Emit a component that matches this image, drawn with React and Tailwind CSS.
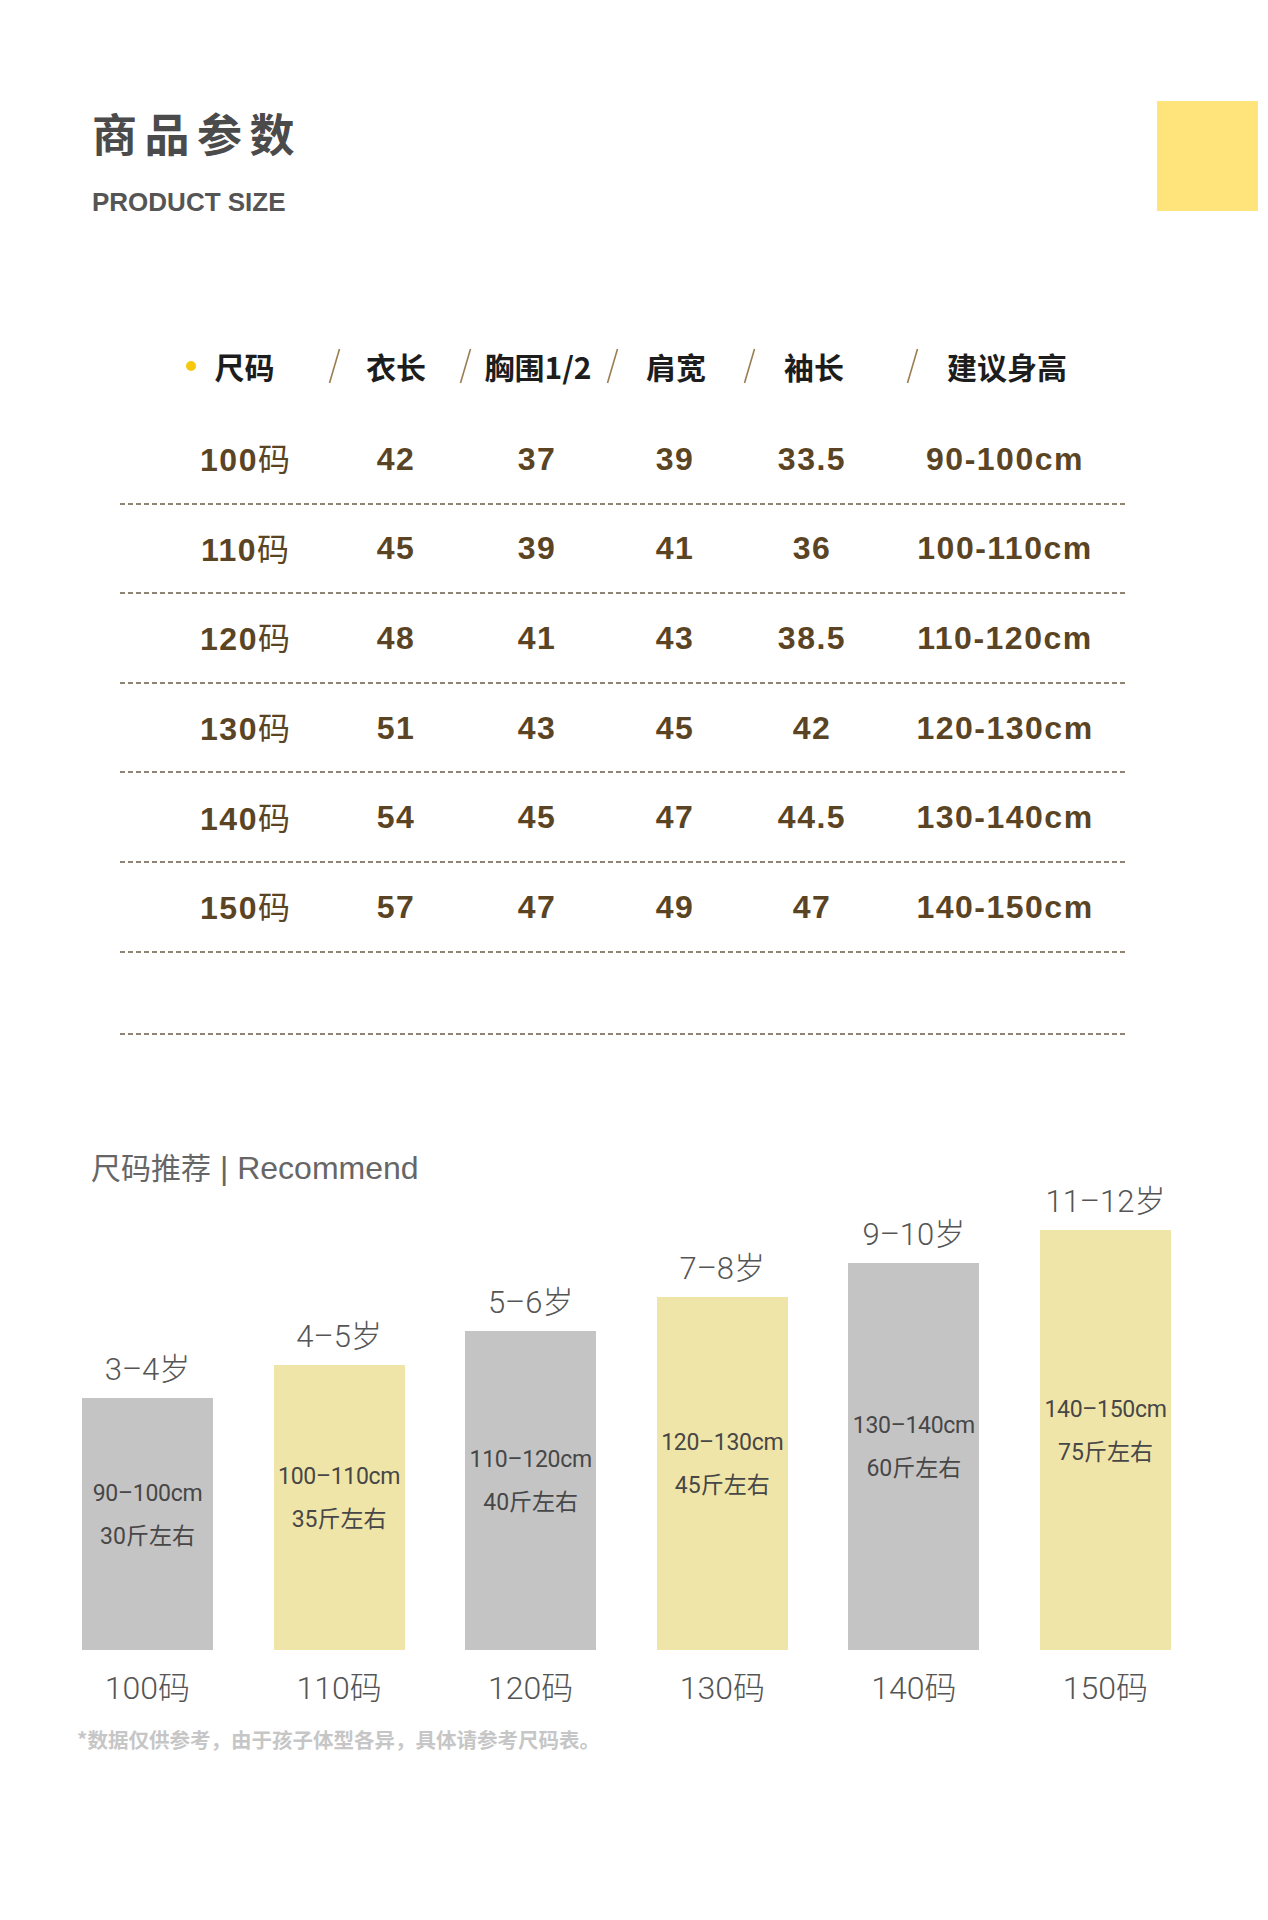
// Size chart page: product parameter table + size recommendation bars
const CJK = "font-['Noto_Sans_CJK_SC',sans-serif]";
const NUM = "font-['Liberation_Sans','Noto_Sans_CJK_SC',sans-serif]";
const THIN = "font-['Roboto','Noto_Sans_CJK_SC',sans-serif]";

const rows = [
  ['100', '42', '37', '39', '33.5', '90-100cm'],
  ['110', '45', '39', '41', '36', '100-110cm'],
  ['120', '48', '41', '43', '38.5', '110-120cm'],
  ['130', '51', '43', '45', '42', '120-130cm'],
  ['140', '54', '45', '47', '44.5', '130-140cm'],
  ['150', '57', '47', '49', '47', '140-150cm'],
];

const bars = [
  { age: '3–4岁', h: 252, cm: '90–100cm', jin: '30', size: '100', yellow: false },
  { age: '4–5岁', h: 285, cm: '100–110cm', jin: '35', size: '110', yellow: true },
  { age: '5–6岁', h: 319, cm: '110–120cm', jin: '40', size: '120', yellow: false },
  { age: '7–8岁', h: 353, cm: '120–130cm', jin: '45', size: '130', yellow: true },
  { age: '9–10岁', h: 387, cm: '130–140cm', jin: '60', size: '140', yellow: false },
  { age: '11–12岁', h: 420, cm: '140–150cm', jin: '75', size: '150', yellow: true },
];

function Slash({ className }) {
  return (
    <svg width="13" height="36" viewBox="0 0 13 36" className={className}>
      <line x1="11.5" y1="1" x2="1.5" y2="35" stroke="#9b7d52" strokeWidth="1.6" />
    </svg>
  );
}

function Dashed() {
  return (
    <div className="h-[2px] w-full bg-[image:repeating-linear-gradient(90deg,#8f8473_0px,#8f8473_5px,transparent_5px,transparent_8px)]" />
  );
}

export default function App() {
  return (
    <div className="w-[1268px] min-h-[1920px] bg-white">
      {/* Heading */}
      <div className="flex items-start justify-between">
        <div className="pl-[92px] pt-[110px]">
          <h1 className={`${CJK} text-[45px] leading-none font-bold tracking-[7.5px] text-[#4b4b4b]`}>
            商品参数
          </h1>
          <p className={`${NUM} mt-[34px] text-[26px] leading-none font-bold text-[#555555]`}>
            PRODUCT SIZE
          </p>
        </div>
        <div className="mt-[101px] mr-[10px] w-[101px] h-[110px] bg-[#fee47b]" />
      </div>

      {/* Table header */}
      <div className={`${CJK} mt-[120.5px] flex items-center h-[60px] pl-[186px] text-[30px] leading-none font-bold text-[#1d1d1d] whitespace-nowrap`}>
        <span className="w-[10px] h-[10px] rounded-full bg-[#f6c90e]" />
        <span className="ml-[18px] w-[61px] text-center">尺码</span>
        <Slash className="ml-[53px]" />
        <span className="ml-[25px] w-[60px] text-center">衣长</span>
        <Slash className="ml-[33px]" />
        <span className="ml-[9px] w-[114px] text-center">胸围1/2</span>
        <Slash className="ml-[11px]" />
        <span className="ml-[26px] w-[62px] text-center">肩宽</span>
        <Slash className="ml-[36px]" />
        <span className="ml-[27px] w-[62px] text-center">袖长</span>
        <Slash className="ml-[61px]" />
        <span className="ml-[25px] w-[126px] text-center">建议身高</span>
      </div>

      {/* Table rows */}
      <div className="mt-[19.5px] ml-[120px] w-[1008px]">
        {rows.map((r) => (
          <div key={r[0]}>
            <div className={`${NUM} h-[87.6px] pl-[25px] grid grid-cols-[200px_102px_180px_96px_178px_208px] items-center text-[32px] font-bold tracking-[1.5px] text-[#5a4424]`}>
              <div className="text-center">
                {r[0]}
                <span className={`${CJK} font-normal tracking-normal`}>码</span>
              </div>
              {r.slice(1).map((v, i) => (
                <div key={i} className="text-center">{v}</div>
              ))}
            </div>
            <Dashed />
          </div>
        ))}
        <div className="h-[80px]" />
        <Dashed />
      </div>

      {/* Recommend */}
      <h2 className="mt-[116px] pl-[91px] flex items-baseline leading-none text-[#666666]">
        <span className={`${CJK} text-[30px]`}>尺码推荐</span>
        <span className={`${NUM} ml-[9px] text-[32px]`}>| Recommend</span>
      </h2>

      <div className="pl-[82px] flex items-end gap-[60.6px]">
        {bars.map((b) => (
          <div key={b.size} className="w-[131px] flex flex-col items-center">
            <div className={`${THIN} mb-[10px] text-[31px] leading-[36px] font-light text-[#555555] whitespace-nowrap`}>
              {b.age}
            </div>
            <div
              className={`w-full flex flex-col items-center justify-center pb-[18px] ${THIN} text-[23px] leading-[43px] text-[#474747] whitespace-nowrap ${b.yellow ? 'bg-[#f0e5a8]' : 'bg-[#c5c4c5]'}`}
              style={{ height: b.h }}
            >
              <div className="tracking-[-0.3px]">{b.cm}</div>
              <div>{b.jin}斤左右</div>
            </div>
            <div className={`${THIN} mt-[20px] text-[32px] leading-[36px] font-light text-[#555555]`}>
              {b.size}码
            </div>
          </div>
        ))}
      </div>

      <p className={`${CJK} mt-[18px] pl-[77px] text-[20.5px] leading-[30px] font-bold text-[#c6c6c6]`}>
        *数据仅供参考，由于孩子体型各异，具体请参考尺码表。
      </p>
    </div>
  );
}
